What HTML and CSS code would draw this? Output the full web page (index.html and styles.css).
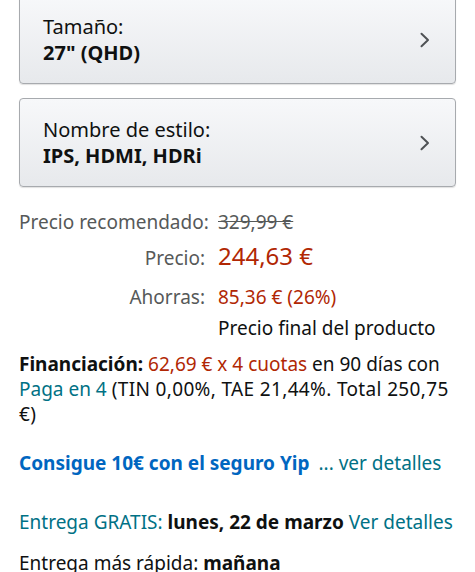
FILE: index.html
```html
<!DOCTYPE html>
<html lang="es">
<head>
<meta charset="utf-8">
<link rel="stylesheet" href="styles.css">
</head>
<body>
<div class="page">
  <div class="selector first">
    <div class="sel-text">
      <div class="sel-label">Tamaño:</div>
      <div class="sel-value">27" (QHD)</div>
    </div>
    <svg class="chev" width="12" height="16" viewBox="0 0 12 16"><path d="M2.5 1.8 L9 8 L2.5 14.2" fill="none" stroke="#4f5255" stroke-width="2" stroke-linecap="round" stroke-linejoin="round"/></svg>
  </div>
  <div class="selector">
    <div class="sel-text">
      <div class="sel-label">Nombre de estilo:</div>
      <div class="sel-value">IPS, HDMI, HDRi</div>
    </div>
    <svg class="chev" width="12" height="16" viewBox="0 0 12 16"><path d="M2.5 1.8 L9 8 L2.5 14.2" fill="none" stroke="#4f5255" stroke-width="2" stroke-linecap="round" stroke-linejoin="round"/></svg>
  </div>

  <div class="prices">
    <div class="plabel r1">Precio recomendado:</div>
    <div class="pval r1 strike">329,99 €</div>
    <div class="plabel r2">Precio:</div>
    <div class="pval r2 big">244,63 €</div>
    <div class="plabel r3">Ahorras:</div>
    <div class="pval r3 red">85,36 € (26%)</div>
    <div class="plabel r4"></div>
    <div class="pval r4">Precio final del producto</div>
  </div>

  <p class="finance"><b>Financiación:</b> <span class="red">62,69 € x 4 cuotas</span> en 90 días con <span class="teal">Paga en 4</span> <span class="terms">(TIN 0,00%, TAE 21,44%. Total 250,75 €)</span></p>

  <p class="yip"><b class="blue">Consigue 10€ con el seguro Yip</b><span class="teal more">... ver detalles</span></p>

  <p class="delivery"><span class="teal">Entrega GRATIS:</span> <b>lunes, 22 de marzo</b> <span class="teal">Ver detalles</span></p>

  <p class="fast">Entrega más rápida: <b>mañana</b></p>
</div>
</body>
</html>
```
FILE: styles.css
```css
html, body {
  margin: 0;
  padding: 0;
  background: #ffffff;
}
body {
  font-family: "Noto Sans", "Open Sans", sans-serif;
  color: #0f1111;
  font-size: 19px;
  line-height: 25px;
  width: 475px;
  height: 572px;
  overflow: hidden;
}
.page {
  padding: 0 19px;
}
.selector {
  display: flex;
  align-items: center;
  justify-content: space-between;
  height: 89px;
  box-sizing: border-box;
  border: 1px solid #a7aaae;
  border-radius: 4px;
  background: linear-gradient(#f7f8fa, #e7e9ec);
  padding: 0 24px 7px 23px;
  margin-bottom: 14px;
  box-shadow: 0 1px 1px rgba(0,0,0,0.12);
}
.selector.first {
  margin-top: -5px;
}
.sel-text {
  padding-top: 8px;
}
.sel-label {
  font-size: 20px;
  line-height: 26px;
}
.sel-value {
  font-size: 20px;
  line-height: 26px;
  font-weight: 700;
}
.chev {
  display: block;
  margin-top: 7px;
}
.prices {
  display: grid;
  grid-template-columns: 186px 1fr;
  column-gap: 13px;
  margin-top: 23px;
  align-items: baseline;
}
.plabel {
  text-align: right;
  color: #565959;
  white-space: nowrap;
}
.r1 { line-height: 25px; }
.r2 { line-height: 41px; }
.r3 { line-height: 37px; }
.r4 { line-height: 25px; }
.strike {
  color: #565959;
  text-decoration: line-through;
}
.big {
  color: #b12704;
  font-size: 24px;
}
.red {
  color: #b12704;
}
.teal {
  color: #007185;
}
.blue {
  color: #0066c0;
}
.finance {
  margin: 11px 0 0;
}
.terms {
  letter-spacing: 0.35px;
}
.yip {
  margin: 24px 0 0;
  white-space: nowrap;
}
.more {
  margin-left: 9px;
}
.delivery {
  margin: 34px 0 0;
  white-space: nowrap;
}
.fast {
  margin: 16px 0 0;
}
```
